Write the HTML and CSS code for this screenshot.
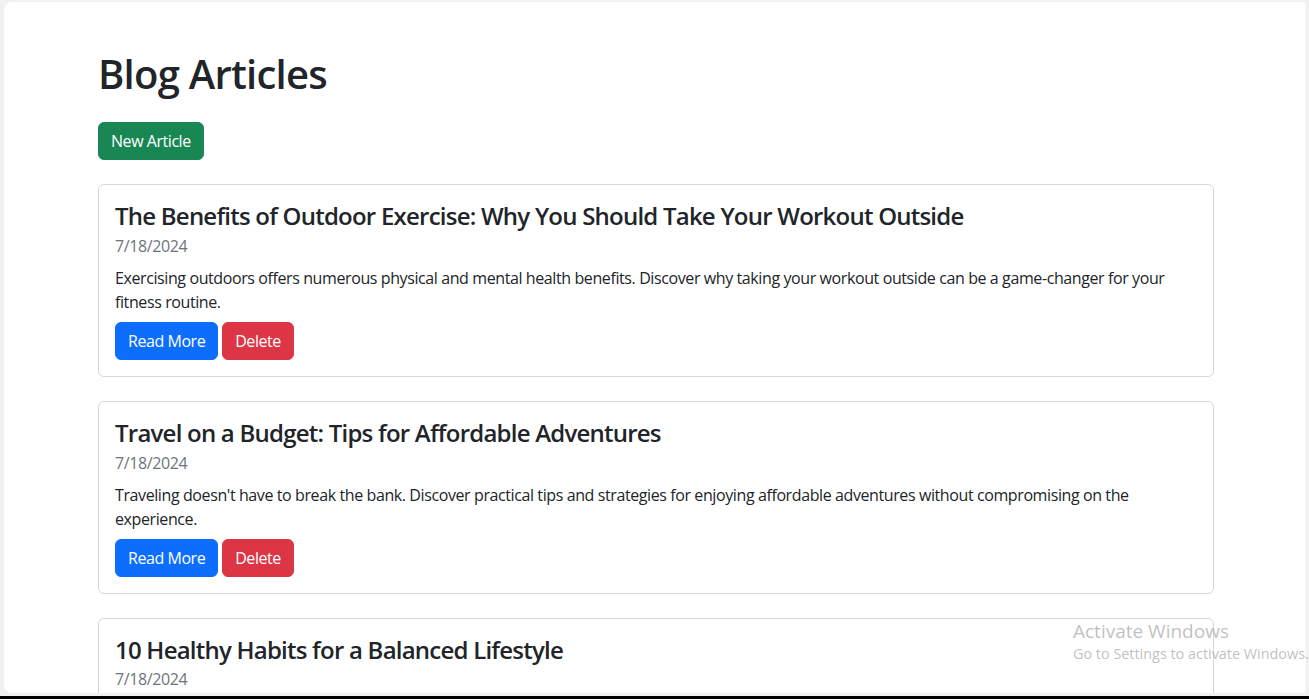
FILE: index.html
```html
<!DOCTYPE html>
<html lang="en">
<head>
<meta charset="utf-8">
<title>Blog Articles</title>
<link rel="stylesheet" href="styles.css">
</head>
<body>
<div class="frame">
  <div class="panel">
    <main class="container">
      <h1 class="page-title">Blog Articles</h1>
      <button class="btn btn-success new-btn">New Article</button>

      <article class="card">
        <h4 class="card-title">The Benefits of Outdoor Exercise: Why You Should Take Your Workout Outside</h4>
        <div class="card-date">7/18/2024</div>
        <p class="card-text">Exercising outdoors offers numerous physical and mental health benefits. Discover why taking your workout outside can be a game-changer for your fitness routine.</p>
        <div class="actions">
          <button class="btn btn-primary">Read More</button>
          <button class="btn btn-danger">Delete</button>
        </div>
      </article>

      <article class="card">
        <h4 class="card-title">Travel on a Budget: Tips for Affordable Adventures</h4>
        <div class="card-date">7/18/2024</div>
        <p class="card-text">Traveling doesn't have to break the bank. Discover practical tips and strategies for enjoying affordable adventures without compromising on the experience.</p>
        <div class="actions">
          <button class="btn btn-primary">Read More</button>
          <button class="btn btn-danger">Delete</button>
        </div>
      </article>

      <article class="card">
        <h4 class="card-title">10 Healthy Habits for a Balanced Lifestyle</h4>
        <div class="card-date">7/18/2024</div>
        <p class="card-text">Adopting healthy habits can improve your overall well-being. Here are ten simple habits to help you lead a balanced lifestyle.</p>
        <div class="actions">
          <button class="btn btn-primary">Read More</button>
          <button class="btn btn-danger">Delete</button>
        </div>
      </article>
    </main>
  </div>
  <div class="taskbar"></div>
  <div class="watermark">
    <div class="wm-title">Activate Windows</div>
    <div class="wm-sub">Go to Settings to activate Windows.</div>
  </div>
</div>
</body>
</html>
```

FILE: styles.css
```css
* { box-sizing: border-box; }

html, body {
  margin: 0;
  padding: 0;
  height: 100%;
  overflow: hidden;
}

body {
  font-family: "Open Sans", "Noto Sans", "Liberation Sans", sans-serif;
  color: #212529;
  background: #f1f1f1;
  font-size: 16px;
  line-height: 1.5;
  letter-spacing: -0.4px;
}

.frame {
  position: relative;
  height: 699px;
  display: flex;
  flex-direction: column;
  padding: 2px 0 0 4px;
}

.panel {
  width: 1302px;
  height: 691px;
  background: #ffffff;
  border-radius: 8px 0 0 8px;
  overflow: hidden;
  border-right: 1px solid #f6f6f6;
}

.container {
  width: 1140px;
  margin-left: 82px;
  padding: 48px 12px 0;
}

.page-title {
  margin: 0 0 24px;
  font-size: 40px;
  font-weight: 600;
  line-height: 1.2;
  letter-spacing: -0.75px;
}

.btn {
  display: inline-block;
  font-family: inherit;
  font-size: 16px;
  letter-spacing: -0.45px;
  line-height: 24px;
  padding: 6px 12px;
  border: 1px solid transparent;
  border-radius: 6px;
  color: #fff;
  cursor: pointer;
}

.btn-success { background: #198754; border-color: #198754; }
.btn-primary { background: #0d6efd; border-color: #0d6efd; }
.btn-danger  { background: #dc3545; border-color: #dc3545; }

.new-btn { margin-bottom: 24px; }

.card {
  border: 1px solid #d6d7d8;
  border-radius: 6px;
  padding: 17px 16px 16px;
  margin-bottom: 24px;
  background: #fff;
}

.card-title {
  margin: 0 0 3px;
  font-size: 24px;
  font-weight: 600;
  line-height: 1.2;
  letter-spacing: -0.77px;
}

.card-date {
  color: #6c757d;
  margin-bottom: 8px;
}

.card-text {
  margin: 0 0 8px;
}

.actions {
  display: flex;
  gap: 4px;
}

.taskbar {
  margin-top: 3px;
  margin-left: -4px;
  height: 3px;
  background: #000;
}

.watermark {
  position: absolute;
  left: 1073px;
  top: 620px;
  color: rgba(150, 150, 150, 0.6);
  line-height: 1.25;
  letter-spacing: 0;
  pointer-events: none;
}

.wm-title { font-size: 19px; }
.wm-sub { font-size: 14.4px; margin-top: 1px; }
```
